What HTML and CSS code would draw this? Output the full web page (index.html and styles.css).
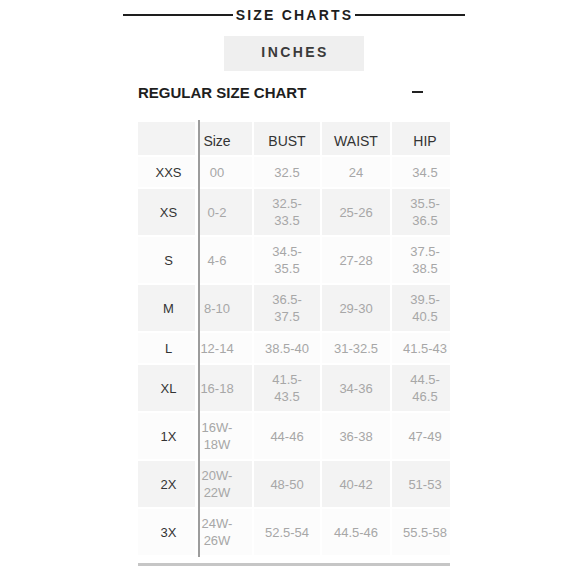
FILE: index.html
```html
<!DOCTYPE html>
<html lang="en">
<head>
<meta charset="utf-8">
<title>Size Charts</title>
<link rel="stylesheet" href="styles.css">
</head>
<body>
<main class="page">
  <div class="title">
    <span class="title-line"></span>
    <h1 class="title-text">SIZE CHARTS</h1>
    <span class="title-line"></span>
  </div>
  <div class="unit-tab">INCHES</div>
  <div class="chart-head">
    <h2 class="chart-name">REGULAR SIZE CHART</h2>
    <span class="collapse" aria-label="collapse"></span>
  </div>
  <table class="chart">
    <thead>
      <tr class="row-head">
        <th class="c-label"></th>
        <th class="c-size">Size</th>
        <th class="c-bust">BUST</th>
        <th class="c-waist">WAIST</th>
        <th class="c-hip">HIP</th>
      </tr>
    </thead>
    <tbody>
      <tr class="single light">
        <th class="c-label">XXS</th><td class="c-size">00</td><td class="c-bust">32.5</td><td class="c-waist">24</td><td class="c-hip">34.5</td>
      </tr>
      <tr class="double shade">
        <th class="c-label">XS</th><td class="c-size">0-2</td><td class="c-bust">32.5-<br>33.5</td><td class="c-waist">25-26</td><td class="c-hip">35.5-<br>36.5</td>
      </tr>
      <tr class="double light">
        <th class="c-label">S</th><td class="c-size">4-6</td><td class="c-bust">34.5-<br>35.5</td><td class="c-waist">27-28</td><td class="c-hip">37.5-<br>38.5</td>
      </tr>
      <tr class="double shade">
        <th class="c-label">M</th><td class="c-size">8-10</td><td class="c-bust">36.5-<br>37.5</td><td class="c-waist">29-30</td><td class="c-hip">39.5-<br>40.5</td>
      </tr>
      <tr class="single light">
        <th class="c-label">L</th><td class="c-size">12-14</td><td class="c-bust">38.5-40</td><td class="c-waist">31-32.5</td><td class="c-hip">41.5-43</td>
      </tr>
      <tr class="double shade">
        <th class="c-label">XL</th><td class="c-size">16-18</td><td class="c-bust">41.5-<br>43.5</td><td class="c-waist">34-36</td><td class="c-hip">44.5-<br>46.5</td>
      </tr>
      <tr class="double light">
        <th class="c-label">1X</th><td class="c-size">16W-<br>18W</td><td class="c-bust">44-46</td><td class="c-waist">36-38</td><td class="c-hip">47-49</td>
      </tr>
      <tr class="double shade">
        <th class="c-label">2X</th><td class="c-size">20W-<br>22W</td><td class="c-bust">48-50</td><td class="c-waist">40-42</td><td class="c-hip">51-53</td>
      </tr>
      <tr class="double light">
        <th class="c-label">3X</th><td class="c-size">24W-<br>26W</td><td class="c-bust">52.5-54</td><td class="c-waist">44.5-46</td><td class="c-hip">55.5-58</td>
      </tr>
    </tbody>
  </table>
  <div class="chart-end"></div>
</main>
</body>
</html>
```

FILE: styles.css
```css
* { box-sizing: border-box; }

html, body {
  margin: 0;
  padding: 0;
  background: #ffffff;
}

body {
  font-family: "Liberation Sans", Arial, Helvetica, sans-serif;
  color: #333333;
}

.page {
  width: 342px;
  margin-left: 123px;
  padding-top: 7px;
  display: flex;
  flex-direction: column;
}

.title {
  display: flex;
  align-items: center;
  height: 16px;
}

.title-line {
  flex: 1;
  height: 2px;
  background: #1e1e1e;
}

.title-text {
  margin: 0 2px 0 3px;
  font-size: 14px;
  line-height: 16px;
  font-weight: bold;
  letter-spacing: 2.2px;
  color: #1e1e1e;
}

.unit-tab {
  align-self: center;
  width: 140px;
  height: 35px;
  margin-top: 13px;
  padding: 8px 0 11px 2px;
  background: #efefef;
  font-size: 14px;
  line-height: 16px;
  font-weight: bold;
  letter-spacing: 2.4px;
  text-align: center;
  color: #3a3a3a;
}

.chart-head {
  display: flex;
  align-items: center;
  justify-content: space-between;
  width: 285px;
  margin-left: 15px;
  margin-top: 13px;
  height: 18px;
}

.chart-name {
  margin: 0;
  font-size: 15px;
  line-height: 18px;
  font-weight: bold;
  color: #1e1e1e;
}

.collapse {
  width: 11px;
  height: 2px;
  margin-bottom: 2px;
  background: #222222;
}

.chart {
  align-self: center;
  width: 316px;
  margin-top: 18px;
  table-layout: fixed;
  border-collapse: separate;
  border-spacing: 2px;
  background: linear-gradient(90deg, transparent 62px, #9c9c9c 62px, #9c9c9c 64px, transparent 64px);
}

.chart th,
.chart td {
  padding: 0;
  text-align: center;
  vertical-align: middle;
  font-weight: normal;
  white-space: nowrap;
  background-clip: padding-box;
}

.c-label { width: 57px; padding-left: 4px !important; }
.c-size {
  width: 55px;
  border-left: 3px solid transparent;
  padding-right: 18px !important;
}
.c-bust { width: 66px; }
.c-waist { width: 68px; }
.c-hip { width: 58px; padding-left: 8px !important; }

.row-head th {
  height: 33px;
  padding-top: 6px !important;
  background-color: #f3f3f3;
  font-size: 14px;
  line-height: 17px;
  color: #333333;
}

.chart tbody th {
  font-size: 13px;
  line-height: 17px;
  color: #333333;
}

.chart tbody td {
  font-size: 13px;
  line-height: 17px;
  color: #a7a7a7;
}

.single th, .single td { height: 30px; }
.double th, .double td { height: 46px; }

.shade th, .shade td { background-color: #f3f3f3; }
.light th, .light td { background-color: #fcfcfc; }

.chart-end {
  align-self: center;
  width: 312px;
  height: 3px;
  margin-top: 6px;
  background: #c6c6c6;
}
```
